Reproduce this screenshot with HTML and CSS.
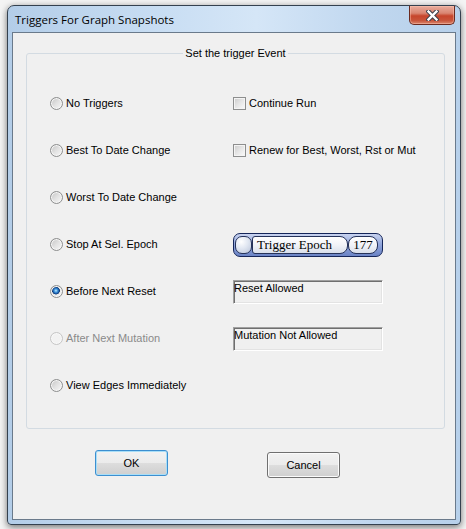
FILE: index.html
```html
<!DOCTYPE html>
<html lang="en">
<head>
<meta charset="utf-8">
<title>Triggers For Graph Snapshots</title>
<link rel="stylesheet" href="styles.css">
</head>
<body>
<div class="window">
  <div class="titlebar">
    <span class="title">Triggers For Graph Snapshots</span>
    <button class="close" aria-label="Close">
      <svg width="13" height="11" viewBox="0 0 13 11">
        <path d="M2.5 1.5 L10.5 9.5 M10.5 1.5 L2.5 9.5" stroke="#3b3f4a" stroke-width="4.4" stroke-linecap="square" fill="none"/>
        <path d="M2.5 1.5 L10.5 9.5 M10.5 1.5 L2.5 9.5" stroke="#ffffff" stroke-width="2.4" stroke-linecap="square" fill="none"/>
      </svg>
    </button>
  </div>
  <div class="frame">
    <div class="client">
      <fieldset class="group">
        <legend>Set the trigger Event</legend>
        <div class="grid">
          <label class="opt"><span class="radio"></span>No Triggers</label>
          <label class="opt"><span class="check"></span>Continue Run</label>

          <label class="opt"><span class="radio"></span>Best To Date Change</label>
          <label class="opt"><span class="check"></span>Renew for Best, Worst, Rst or Mut</label>

          <label class="opt"><span class="radio"></span>Worst To Date Change</label>
          <div class="empty"></div>

          <label class="opt"><span class="radio"></span>Stop At Sel. Epoch</label>
          <div class="epoch">
            <span class="knob"></span>
            <span class="pill name">Trigger Epoch</span>
            <span class="pill val">177</span>
          </div>

          <label class="opt"><span class="radio checked"></span>Before Next Reset</label>
          <div class="status">Reset Allowed</div>

          <label class="opt disabled"><span class="radio"></span>After Next Mutation</label>
          <div class="status">Mutation Not Allowed</div>

          <label class="opt"><span class="radio"></span>View Edges Immediately</label>
          <div class="empty"></div>
        </div>
      </fieldset>
      <div class="buttons">
        <button class="btn default">OK</button>
        <button class="btn cancel">Cancel</button>
      </div>
    </div>
  </div>
</div>
</body>
</html>
```

FILE: styles.css
```css
html, body {
  margin: 0;
  padding: 0;
}
body {
  background: #f4f4f4;
  width: 466px;
  height: 529px;
  overflow: hidden;
  font-family: "Liberation Sans", Arial, sans-serif;
  font-size: 11px;
  color: #000;
}
.window {
  box-sizing: border-box;
  margin: 5px 0 0 7px;
  width: 454px;
  height: 520px;
  border: 1px solid #34414f;
  border-radius: 7px 7px 4px 4px;
  background: linear-gradient(90deg, #b3cde8 0%, #c6dcf2 30%, #d5e6f7 55%, #c0d7ef 80%, #b7d0ea 100%);
  box-shadow: 0 2px 7px rgba(0, 0, 0, 0.55);
  display: flex;
  flex-direction: column;
}
.titlebar {
  height: 26px;
  display: flex;
  align-items: center;
  padding-left: 7px;
  padding-right: 5px;
}
.title {
  font-family: "Open Sans", "Noto Sans", sans-serif;
  font-size: 11.5px;
  color: #000;
  padding-top: 1px;
}
.close {
  margin-left: auto;
  align-self: flex-start;
  width: 46px;
  height: 19px;
  padding: 0;
  border: 1px solid #6b2a1f;
  border-top: none;
  border-radius: 0 0 5px 5px;
  background: linear-gradient(#e9ad9e 0%, #d98571 40%, #c6452c 55%, #c8543a 80%, #d9866d 100%);
  box-shadow: inset 0 0 0 1px rgba(255, 200, 180, 0.45);
  display: flex;
  align-items: center;
  justify-content: center;
}
.close svg {
  display: block;
}
.frame {
  flex: 1;
  padding: 0 4px 4px 4px;
  display: flex;
}
.client {
  flex: 1;
  box-sizing: border-box;
  border: 1px solid #6a7a8b;
  background: #f0f0f0;
  padding-top: 14px;
  display: flex;
  flex-direction: column;
}
.group {
  margin: 0 10px 0 13px;
  padding: 20px 0 19px 0;
  border: 1px solid #d3dbe2;
  border-radius: 3px;
  min-width: 0;
}
.group legend {
  margin: 0 auto;
  padding: 0 2px;
  line-height: 13px;
  font-size: 11px;
  color: #000;
}
.grid {
  display: grid;
  grid-template-columns: 183px 1fr;
  grid-auto-rows: 47px;
  align-items: center;
  padding-left: 23px;
}
.opt {
  display: flex;
  align-items: center;
  gap: 3px;
  line-height: 13px;
  white-space: nowrap;
}
.opt.disabled {
  color: #8a8a8a;
}
.radio {
  flex: none;
  box-sizing: border-box;
  width: 13px;
  height: 13px;
  border-radius: 50%;
  border: 1px solid #8d8e8e;
  box-shadow: inset 0 0 0 1px #f6f6f6;
  background: linear-gradient(135deg, #c4c4c4 0%, #e2e2e2 50%, #f8f8f8 100%);
}
.radio.checked {
  background:
    radial-gradient(circle at 45% 42%, #c8ecff 0, #4fa3e3 1.4px, #1b5fae 2.8px, #0b356f 3.6px, rgba(11, 53, 111, 0) 4.1px),
    linear-gradient(135deg, #c4c4c4 0%, #e2e2e2 50%, #f8f8f8 100%);
}
.disabled .radio {
  border-color: #c5c5c5;
  box-shadow: inset 0 0 0 1px #f8f8f8;
  background: #f2f2f2;
}
.check {
  flex: none;
  box-sizing: border-box;
  width: 13px;
  height: 13px;
  border: 1px solid #8d8e8e;
  box-shadow: inset 0 0 0 1px #f4f4f4;
  background: linear-gradient(135deg, #cbcbcb 0%, #e6e6e6 50%, #fbfbfb 100%);
}
.epoch {
  box-sizing: border-box;
  width: 150px;
  height: 24px;
  border: 1px solid #15265a;
  border-radius: 7px;
  background: linear-gradient(#c9d4f0 0%, #93a7dc 45%, #6b84c6 100%);
  padding: 0 3px 0 1px;
  display: flex;
  align-items: center;
  font-family: "Liberation Serif", "Times New Roman", serif;
  font-size: 13px;
  color: #000;
}
.knob {
  box-sizing: border-box;
  width: 17px;
  height: 18px;
  border: 1px solid #26335a;
  border-radius: 7px;
  background: radial-gradient(circle at 35% 30%, #ffffff 0%, #e1e7f2 45%, #b9c4d9 100%);
}
.pill {
  box-sizing: border-box;
  height: 18px;
  border: 1px solid #26335a;
  border-radius: 8px;
  background: linear-gradient(#ffffff 0%, #f1f3f8 50%, #d9dfeb 100%);
  line-height: 16px;
  white-space: nowrap;
}
.name {
  width: 96px;
  padding-left: 4px;
  border-radius: 3px 8px 8px 3px;
}
.val {
  width: 30px;
  text-align: center;
}
.status {
  box-sizing: border-box;
  width: 150px;
  height: 24px;
  border-top: 1px solid #a0a0a0;
  border-left: 1px solid #a0a0a0;
  border-right: 1px solid #ffffff;
  border-bottom: 1px solid #ffffff;
  box-shadow: inset 1px 1px 0 #6f6f6f, inset -1px -1px 0 #e3e3e3;
  padding: 1px 0 0 0;
  line-height: 13px;
  white-space: nowrap;
}
.buttons {
  margin-top: 21px;
  padding-left: 82px;
  display: flex;
  align-items: flex-start;
  gap: 99px;
}
.btn {
  box-sizing: border-box;
  width: 73px;
  height: 26px;
  padding: 0;
  border: 1px solid #707070;
  border-radius: 3px;
  background: linear-gradient(#f2f2f2 0%, #ebebeb 50%, #dddddd 51%, #cfcfcf 100%);
  box-shadow: inset 0 0 0 1px #fbfbfb;
  font-family: "Liberation Sans", Arial, sans-serif;
  font-size: 11px;
  color: #000;
}
.btn.default {
  border-color: #3c8fd0;
  box-shadow: inset 0 0 0 1px #a9def7;
}
.btn.cancel {
  margin-top: 2px;
}
```
